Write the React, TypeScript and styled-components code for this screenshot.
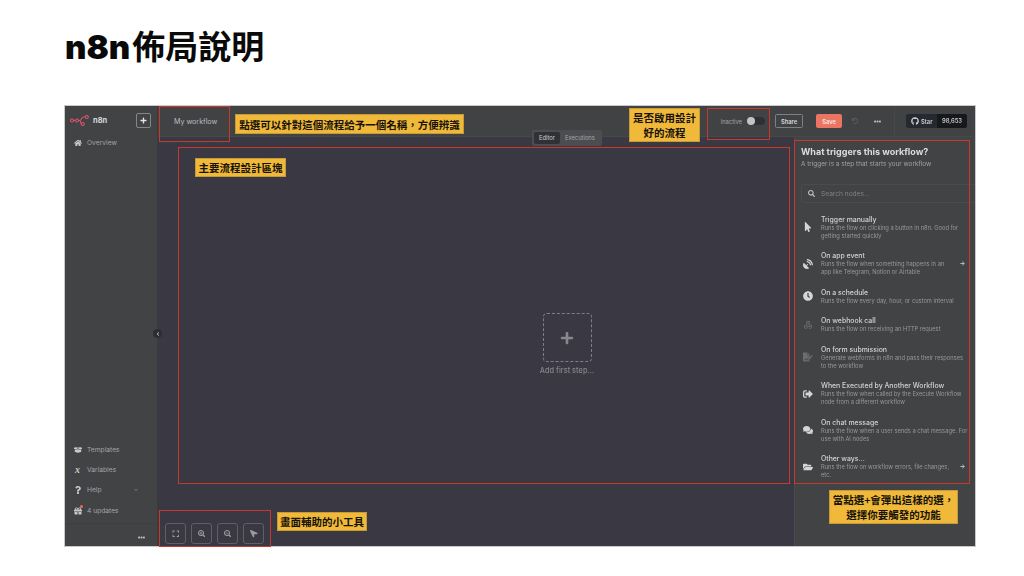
import * as React from 'react';
import styled, { createGlobalStyle } from 'styled-components';
import {
  FaHome,
  FaBoxOpen,
  FaQuestion,
  FaGift,
  FaChevronDown,
  FaChevronLeft,
  FaEllipsisH,
  FaPlus,
  FaSearch,
  FaGithub,
  FaUndo,
  FaExpand,
  FaSearchPlus,
  FaSearchMinus,
  FaMousePointer,
  FaSatelliteDish,
  FaClock,
  FaFileSignature,
  FaSignOutAlt,
  FaComments,
  FaFolderOpen,
  FaArrowRight,
  FaLocationArrow,
} from 'react-icons/fa';
import { MdWebhook } from 'react-icons/md';

const cjk = '"Noto Sans CJK TC", "Noto Sans CJK SC", sans-serif';

const GlobalStyle = createGlobalStyle`
  html, body {
    margin: 0;
    background: #fff;
    overflow: hidden;
  }
  body {
    font-family: Inter, "Noto Sans", sans-serif;
  }
`;

const Slide = styled.div`
  width: 1024px;
  height: 576px;
  padding: 25px 49px 0 65px;
  box-sizing: border-box;
`;

const Title = styled.h1`
  margin: 0;
  height: 40px;
  font: 700 33px/40px ${cjk};
  color: #0a0a0a;
  white-space: nowrap;
`;

const TitleLatin = styled.span`
  margin-right: 2px;
  font: 900 33px/40px Inter, sans-serif;
`;

const Frame = styled.div`
  position: relative;
  display: flex;
  width: 910px;
  height: 440px;
  margin-top: 41px;
  background: #424345;
  box-shadow: 0 0 0 1px #c9c9c9;
  filter: blur(0.35px);
`;

const Sidebar = styled.aside`
  display: flex;
  flex-direction: column;
  width: 93px;
  flex-shrink: 0;
  box-sizing: border-box;
  background: #424345;
  border-right: 1px solid #3a3b3d;
`;

const LogoRow = styled.div`
  display: flex;
  align-items: center;
  height: 28px;
  padding: 0 6px 0 5px;
  margin-bottom: -1px;
`;

const LogoText = styled.span`
  margin-left: 4px;
  font-size: 7.5px;
  font-weight: 700;
  color: #d8d8da;
`;

const AddButton = styled.button`
  display: flex;
  align-items: center;
  justify-content: center;
  width: 15px;
  height: 15px;
  margin-left: auto;
  padding: 0;
  color: #e6e6e8;
  font-size: 7px;
  background: transparent;
  border: 1px solid #85868a;
  border-radius: 2px;
`;

const NavList = styled.nav<{ $bottom?: boolean }>`
  display: flex;
  flex-direction: column;
  margin-top: ${(p) => (p.$bottom ? 'auto' : '0')};
  padding: 0 0 2px 0;
`;

const NavItem = styled.div`
  display: flex;
  align-items: center;
  height: 20.4px;
  padding: 0 19px 0 8px;
  font-size: 6.7px;
  color: #a3a4a8;
`;

const NavIcon = styled.span`
  position: relative;
  display: flex;
  align-items: center;
  justify-content: center;
  width: 9px;
  margin-right: 5px;
  font-size: 8px;
  color: #c8c9cc;
`;

const VariableGlyph = styled.span`
  font: italic 700 10px/10px "Liberation Serif", serif;
`;

const GiftDot = styled.i`
  position: absolute;
  top: -2px;
  right: -1px;
  width: 3px;
  height: 3px;
  border-radius: 50%;
  background: #ef6a5a;
`;

const NavChevron = styled.span`
  display: flex;
  margin-left: auto;
  font-size: 4px;
  color: #7e7f83;
`;

const SidebarFooter = styled.div`
  display: flex;
  align-items: center;
  justify-content: flex-end;
  height: 23px;
  padding: 5px 12px 0 0;
  box-sizing: border-box;
  font-size: 7px;
  color: #c0c1c4;
  border-top: 1px solid #3e3f41;
`;

const Workspace = styled.div`
  display: flex;
  flex-direction: column;
  flex: 1;
  min-width: 0;
`;

const Header = styled.header`
  display: flex;
  align-items: center;
  height: 31px;
  flex-shrink: 0;
  background: #414244;
  border-bottom: 1px solid #47484a;
  box-sizing: border-box;
`;

const WorkflowName = styled.span`
  margin-left: 16px;
  font-size: 7.1px;
  color: #bcbdc0;
`;

const HeaderRight = styled.div`
  display: flex;
  align-items: center;
  margin-left: auto;
  height: 100%;
`;

const StatusLabel = styled.span`
  font-size: 5.8px;
  color: #a4a5a9;
`;

const Toggle = styled.span`
  position: relative;
  width: 18px;
  height: 8px;
  margin: 0 10px 0 5px;
  background: #2f3033;
  border-radius: 5px;
`;

const ToggleKnob = styled.i`
  position: absolute;
  left: 0;
  top: 0;
  width: 8px;
  height: 8px;
  border-radius: 50%;
  background: #c3c4c7;
`;

const ShareButton = styled.button`
  width: 28px;
  height: 14px;
  padding: 0;
  font: 600 5.8px Inter, sans-serif;
  color: #d6d7d9;
  background: transparent;
  border: 1px solid #7f8084;
  border-radius: 1.5px;
`;

const SaveButton = styled.button`
  width: 26px;
  height: 14px;
  margin-left: 13px;
  padding: 0;
  font: 600 5.8px Inter, sans-serif;
  color: #fbe4df;
  background: #ec7463;
  border: none;
  border-radius: 2px;
`;

const HeaderIcon = styled.span<{ $dim?: boolean }>`
  display: flex;
  margin-left: ${(p) => (p.$dim ? '10px' : '16px')};
  font-size: ${(p) => (p.$dim ? '6px' : '7px')};
  color: ${(p) => (p.$dim ? '#5d5e61' : '#c0c1c4')};
`;

const StarArea = styled.div`
  display: flex;
  align-items: center;
  height: 100%;
  margin-left: 13px;
  padding: 0 8px 0 11px;
  border-left: 1px solid #47484a;
`;

const StarLabel = styled.span`
  display: flex;
  align-items: center;
  gap: 2px;
  width: 31px;
  height: 14px;
  padding-left: 5px;
  box-sizing: border-box;
  font-size: 5.8px;
  font-weight: 600;
  color: #cfd0d3;
  background: #262a30;
  border-radius: 2px 0 0 2px;
`;

const StarCount = styled.span`
  width: 30px;
  height: 14px;
  font-size: 5.8px;
  font-weight: 600;
  line-height: 14px;
  text-align: center;
  color: #c6c7ca;
  background: #17181c;
  border-radius: 0 2px 2px 0;
`;

const Body = styled.div`
  display: flex;
  flex: 1;
  min-height: 0;
`;

const Canvas = styled.main`
  position: relative;
  flex: 1;
  background-color: #3a3943;
  background-image: radial-gradient(#44434d 0.6px, transparent 0.7px);
  background-size: 11px 11px;
`;

const ViewTabs = styled.div`
  position: absolute;
  top: -7px;
  left: 374px;
  display: flex;
  align-items: center;
  height: 16px;
  padding: 0 2px;
  box-sizing: border-box;
  background: #4c4d50;
  border-radius: 2px;
`;

const ViewTab = styled.span<{ $active?: boolean }>`
  height: 12px;
  padding: 0 5px;
  font-size: 5.8px;
  line-height: 12px;
  color: ${(p) => (p.$active ? '#cfd0d3' : '#a5a6aa')};
  background: ${(p) => (p.$active ? '#303135' : 'transparent')};
  border-radius: 2px;
`;

const CollapseHandle = styled.button`
  position: absolute;
  top: 192px;
  left: -5px;
  display: flex;
  align-items: center;
  justify-content: center;
  width: 9px;
  height: 9px;
  padding: 0;
  font-size: 4px;
  color: #d0d1d4;
  background: #2c2d30;
  border: none;
  border-radius: 50%;
`;

const FirstStep = styled.div`
  position: absolute;
  top: 176px;
  left: 375px;
  display: flex;
  flex-direction: column;
  align-items: center;
  width: 68px;
`;

const StepBox = styled.div`
  display: flex;
  align-items: center;
  justify-content: center;
  width: 49px;
  height: 49px;
  box-sizing: border-box;
  font-size: 14px;
  color: #87878e;
  border: 1.5px dashed #7e7e86;
  border-radius: 4px;
`;

const StepLabel = styled.span`
  margin-top: 4px;
  font-size: 7.4px;
  font-weight: 500;
  color: #85858c;
  white-space: nowrap;
`;

const CanvasTools = styled.div`
  position: absolute;
  left: 7px;
  bottom: 2px;
  display: flex;
  gap: 5px;
`;

const ToolButton = styled.button`
  display: flex;
  align-items: center;
  justify-content: center;
  width: 21px;
  height: 21px;
  padding: 0;
  font-size: 7.5px;
  color: #9a9aa1;
  background: transparent;
  border: 1px solid #5f5f67;
  border-radius: 3px;
`;

const PointerGlyph = styled.span`
  display: flex;
  transform: rotate(-90deg);
`;

const Panel = styled.aside`
  display: flex;
  flex-direction: column;
  width: 181px;
  flex-shrink: 0;
  box-sizing: border-box;
  padding-top: 9px;
  background: #424345;
  border-left: 1px solid #4a4b4d;
`;

const PanelTitle = styled.h2`
  margin: 0 0 0 6px;
  font-size: 9px;
  font-weight: 700;
  line-height: 12px;
  color: #dcdcde;
`;

const PanelSubtitle = styled.p`
  margin: 1px 0 0 6px;
  font-size: 6.4px;
  line-height: 11px;
  color: #a0a1a5;
`;

const SearchBox = styled.div`
  display: flex;
  align-items: center;
  height: 19px;
  margin: 14px 0 0 6px;
  padding-left: 6px;
  box-sizing: border-box;
  font-size: 6.6px;
  color: #818286;
  border: 1px solid #4a4b4d;
  border-right: none;
  border-radius: 2px 0 0 2px;
`;

const SearchIcon = styled.span`
  display: flex;
  margin-right: 6px;
  font-size: 7px;
  color: #c4c5c8;
`;

const TriggerList = styled.ul`
  margin: 6px 0 0;
  padding: 0;
  list-style: none;
`;

const TriggerItem = styled.li<{ $active?: boolean }>`
  display: flex;
  align-items: center;
  padding: 5.75px 7px 5.75px 0;
  border-left: 1px solid ${(p) => (p.$active ? '#b5493d' : 'transparent')};
  margin-left: -1px;
`;

const TriggerIcon = styled.span<{ $dim?: boolean }>`
  display: flex;
  justify-content: center;
  width: 26px;
  flex-shrink: 0;
  font-size: 10px;
  color: ${(p) => (p.$dim ? '#6c6d70' : '#d4d5d7')};
`;

const TriggerText = styled.div`
  flex: 1;
  min-width: 0;
`;

const TriggerName = styled.div`
  font-size: 6.9px;
  font-weight: 500;
  line-height: 9px;
  color: #d2d3d5;
`;

const TriggerDesc = styled.div`
  font-size: 5.75px;
  line-height: 8px;
  color: #97989c;
`;

const TriggerArrow = styled.span`
  display: flex;
  width: 11px;
  margin-left: 3px;
  flex-shrink: 0;
  justify-content: center;
  font-size: 5px;
  color: #b5b6b9;
`;

const Outline = styled.div<{ $left: number; $top: number; $width: number; $height: number }>`
  position: absolute;
  left: ${(p) => p.$left}px;
  top: ${(p) => p.$top}px;
  width: ${(p) => p.$width}px;
  height: ${(p) => p.$height}px;
  box-sizing: border-box;
  border: 1.5px solid #c5392e;
  pointer-events: none;
`;

const Callout = styled.div<{ $left: number; $top: number; $width: number; $height: number }>`
  position: absolute;
  left: ${(p) => p.$left}px;
  top: ${(p) => p.$top}px;
  width: ${(p) => p.$width}px;
  height: ${(p) => p.$height}px;
  display: flex;
  align-items: center;
  justify-content: center;
  text-align: center;
  box-sizing: border-box;
  font: 700 10.5px/15px ${cjk};
  white-space: pre-line;
  color: #16130a;
  background: #f0b93a;
  border: 1px solid #c59a3a;
`;

const triggers = [
  { icon: <FaMousePointer />, name: 'Trigger manually', desc: 'Runs the flow on clicking a button in n8n. Good for getting started quickly', active: true },
  { icon: <FaSatelliteDish />, name: 'On app event', desc: 'Runs the flow when something happens in an app like Telegram, Notion or Airtable', arrow: true },
  { icon: <FaClock />, name: 'On a schedule', desc: 'Runs the flow every day, hour, or custom interval' },
  { icon: <MdWebhook />, name: 'On webhook call', desc: 'Runs the flow on receiving an HTTP request', dim: true },
  { icon: <FaFileSignature />, name: 'On form submission', desc: 'Generate webforms in n8n and pass their responses to the workflow', dim: true },
  { icon: <FaSignOutAlt />, name: 'When Executed by Another Workflow', desc: 'Runs the flow when called by the Execute Workflow node from a different workflow' },
  { icon: <FaComments />, name: 'On chat message', desc: 'Runs the flow when a user sends a chat message. For use with AI nodes' },
  { icon: <FaFolderOpen />, name: 'Other ways...', desc: 'Runs the flow on workflow errors, file changes, etc.', arrow: true },
];

const Logo = () => (
  <svg width="19" height="11" viewBox="0 0 19 11" fill="none" stroke="#d9536f" strokeWidth="1.1">
    <circle cx="2" cy="5.5" r="1.5" />
    <circle cx="7" cy="5.5" r="1.5" />
    <circle cx="16.8" cy="2" r="1.5" />
    <circle cx="12.8" cy="9" r="1.5" />
    <path d="M3.5 5.5h2M8.5 5.5h1.4c1.8 0 1.4-3.5 3.4-3.5h2M9.9 5.5c1 0 .6 3.5 1.4 3.5" />
  </svg>
);

export default function App() {
  return (
    <>
      <GlobalStyle />
      <Slide>
        <Title>
          <TitleLatin>n8n</TitleLatin>佈局說明
        </Title>
        <Frame>
          <Sidebar>
            <LogoRow>
              <Logo />
              <LogoText>n8n</LogoText>
              <AddButton>
                <FaPlus />
              </AddButton>
            </LogoRow>
            <NavList>
              <NavItem>
                <NavIcon><FaHome /></NavIcon>
                Overview
              </NavItem>
            </NavList>
            <NavList $bottom>
              <NavItem>
                <NavIcon><FaBoxOpen /></NavIcon>
                Templates
              </NavItem>
              <NavItem>
                <NavIcon><VariableGlyph>x</VariableGlyph></NavIcon>
                Variables
              </NavItem>
              <NavItem>
                <NavIcon><FaQuestion /></NavIcon>
                Help
                <NavChevron><FaChevronDown /></NavChevron>
              </NavItem>
              <NavItem>
                <NavIcon>
                  <FaGift />
                  <GiftDot />
                </NavIcon>
                4 updates
              </NavItem>
            </NavList>
            <SidebarFooter>
              <FaEllipsisH />
            </SidebarFooter>
          </Sidebar>
          <Workspace>
            <Header>
              <WorkflowName>My workflow</WorkflowName>
              <HeaderRight>
                <StatusLabel>Inactive</StatusLabel>
                <Toggle>
                  <ToggleKnob />
                </Toggle>
                <ShareButton>Share</ShareButton>
                <SaveButton>Save</SaveButton>
                <HeaderIcon $dim><FaUndo /></HeaderIcon>
                <HeaderIcon><FaEllipsisH /></HeaderIcon>
                <StarArea>
                  <StarLabel>
                    <FaGithub size={8} />
                    Star
                  </StarLabel>
                  <StarCount>98,653</StarCount>
                </StarArea>
              </HeaderRight>
            </Header>
            <Body>
              <Canvas>
                <ViewTabs>
                  <ViewTab $active>Editor</ViewTab>
                  <ViewTab>Executions</ViewTab>
                </ViewTabs>
                <CollapseHandle>
                  <FaChevronLeft />
                </CollapseHandle>
                <FirstStep>
                  <StepBox>
                    <FaPlus />
                  </StepBox>
                  <StepLabel>Add first step...</StepLabel>
                </FirstStep>
                <CanvasTools>
                  <ToolButton><FaExpand /></ToolButton>
                  <ToolButton><FaSearchPlus /></ToolButton>
                  <ToolButton><FaSearchMinus /></ToolButton>
                  <ToolButton><PointerGlyph><FaLocationArrow /></PointerGlyph></ToolButton>
                </CanvasTools>
              </Canvas>
              <Panel>
                <PanelTitle>What triggers this workflow?</PanelTitle>
                <PanelSubtitle>A trigger is a step that starts your workflow</PanelSubtitle>
                <SearchBox>
                  <SearchIcon><FaSearch /></SearchIcon>
                  Search nodes...
                </SearchBox>
                <TriggerList>
                  {triggers.map((t) => (
                    <TriggerItem key={t.name} $active={t.active}>
                      <TriggerIcon $dim={t.dim}>{t.icon}</TriggerIcon>
                      <TriggerText>
                        <TriggerName>{t.name}</TriggerName>
                        <TriggerDesc>{t.desc}</TriggerDesc>
                      </TriggerText>
                      {t.arrow && (
                        <TriggerArrow><FaArrowRight /></TriggerArrow>
                      )}
                    </TriggerItem>
                  ))}
                </TriggerList>
              </Panel>
            </Body>
          </Workspace>
          <Outline $left={94} $top={0} $width={71} $height={36} />
          <Outline $left={113} $top={41} $width={612} $height={337} />
          <Outline $left={642} $top={2} $width={63} $height={32} />
          <Outline $left={729} $top={34} $width={176} $height={344} />
          <Outline $left={94} $top={404} $width={112} $height={37} />
          <Callout $left={170} $top={8} $width={229} $height={20}>點選可以針對這個流程給予一個名稱，方便辨識</Callout>
          <Callout $left={130} $top={52} $width={91} $height={19}>主要流程設計區塊</Callout>
          <Callout $left={564} $top={2} $width={71} $height={34}>{'是否啟用設計\n好的流程'}</Callout>
          <Callout $left={764} $top={384} $width={129} $height={34}>{'當點選+會彈出這樣的選，\n選擇你要觸發的功能'}</Callout>
          <Callout $left={212} $top={406} $width={90} $height={19}>畫面輔助的小工具</Callout>
        </Frame>
      </Slide>
    </>
  );
}
